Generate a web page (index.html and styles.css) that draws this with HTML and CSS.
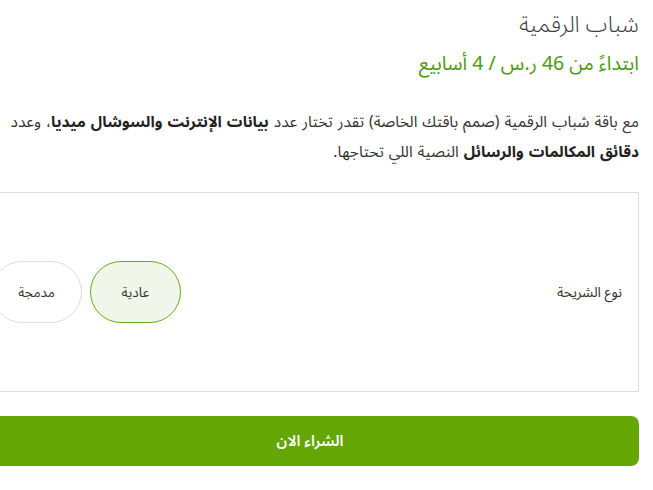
FILE: index.html
```html
<!DOCTYPE html>
<html lang="ar" dir="rtl">
<head>
<meta charset="utf-8">
<link rel="stylesheet" href="styles.css">
</head>
<body>
<main class="product">
  <h1 class="title">شباب الرقمية</h1>
  <p class="price">ابتداءً من 46 ر.س / 4 أسابيع</p>
  <p class="desc"><span class="line">مع باقة شباب الرقمية (صمم باقتك الخاصة) تقدر تختار عدد <b>بيانات الإنترنت والسوشال ميديا</b>، وعدد</span><br><span class="line"><b>دقائق المكالمات والرسائل</b> النصية اللي تحتاجها.</span></p>
  <section class="options">
    <span class="opt-label">نوع الشريحة</span>
    <div class="pills">
      <button class="pill selected">عادية</button>
      <button class="pill">مدمجة</button>
    </div>
  </section>
  <button class="buy">الشراء الان</button>
</main>
</body>
</html>
```
FILE: styles.css
```css
html, body { margin: 0; padding: 0; background: #fff; }
body {
  font-family: "Noto Sans Arabic", "DejaVu Sans", sans-serif;
  color: #333;
}
.product {
  width: 658px;
  margin-right: 14px;
  padding-top: 10px;
}
.title {
  margin: 0;
  font-size: 22.5px;
  font-weight: 300;
  color: #3a3d44;
  line-height: 30px;
}
.price {
  margin: 8px 0 0;
  font-size: 19.5px;
  color: #4c9a0e;
  line-height: 32px;
}
.desc {
  margin: 27px 0 0;
  font-size: 15.5px;
  line-height: 30px;
  color: #333;
  word-spacing: 1px;
}
.desc .line { white-space: nowrap; }
.desc b { font-weight: 700; color: #222; }
.options {
  margin-top: 25px;
  height: 198px;
  border: 1px solid #ddd;
  display: flex;
  align-items: center;
  padding-right: 16px;
}
.opt-label {
  font-size: 14px;
  color: #333;
  width: 441px;
}
.pills { display: flex; gap: 8px; }
.pill {
  width: 91px;
  height: 62px;
  border-radius: 31px;
  border: 1px solid #ddd;
  background: #fff;
  font-family: inherit;
  font-size: 13.5px;
  color: #333;
}
.pill.selected {
  border-color: #6aab1c;
  background: #f0f6ea;
}
.buy {
  display: block;
  margin-top: 24px;
  width: 100%;
  height: 50px;
  border: 0;
  border-radius: 8px;
  background: #64a704;
  color: #fff;
  font-family: inherit;
  font-size: 15px;
  font-weight: 600;
}
```
